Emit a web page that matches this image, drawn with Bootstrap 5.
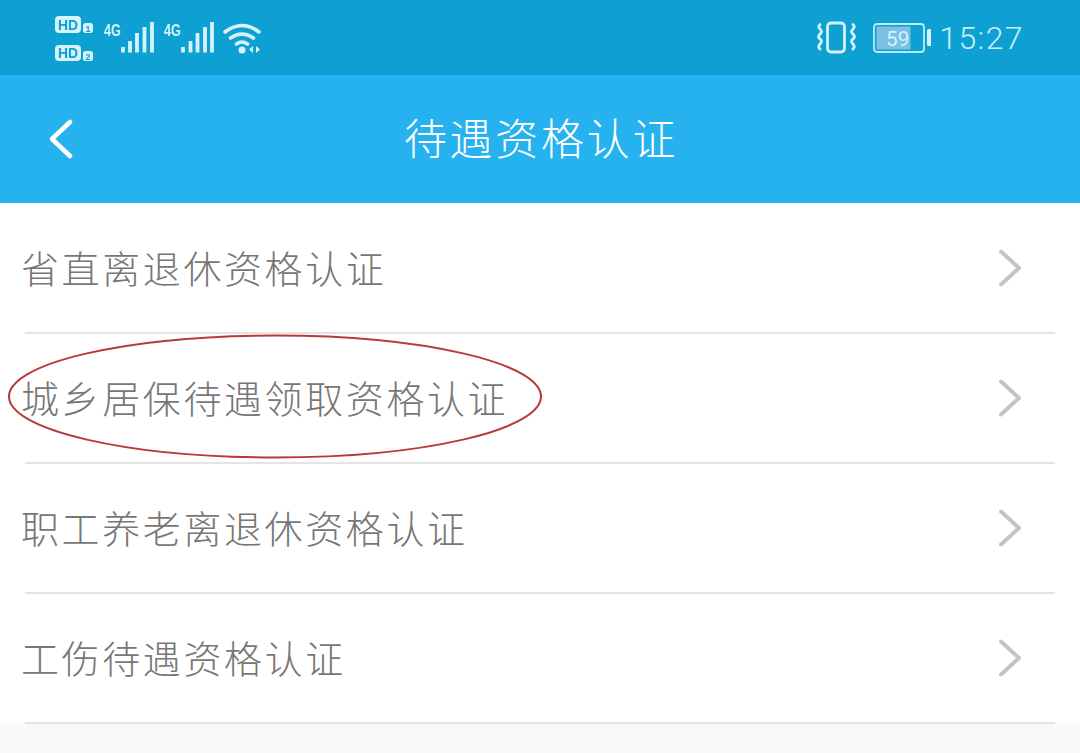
<!DOCTYPE html>
<html lang="zh"><head><meta charset="utf-8"><title>待遇资格认证</title>
<link rel="stylesheet" href="https://cdn.jsdelivr.net/npm/bootstrap@5.3.0/dist/css/bootstrap.min.css">
<style>
html,body{height:753px;overflow:hidden}
body{background:#f9f9f9;font-family:"Noto Sans CJK SC","Liberation Sans",sans-serif;position:relative}
.sbar{height:75px;background:#0ea0d2;color:#d4f3fb;padding:0 56px 0 50px}
.sbar svg{display:block;filter:blur(.35px)}
.clock{font-family:"Roboto","Liberation Sans",sans-serif;font-size:32px;letter-spacing:1.4px;color:#c8eff8;line-height:1;font-weight:300}
.appbar{height:128px;background:#25b2ee;color:#fff;position:relative}
.appbar-title{font-size:43px;letter-spacing:2.7px;margin:-5px 0 0 2px;font-weight:300;line-height:1}
.back{position:absolute;left:46px;top:44px}
.rowitem{height:130px;background:#fff;position:relative;padding:0 57px 0 21px}
.rowitem::after{content:"";position:absolute;left:25px;right:25px;bottom:-1px;height:2px;background:#e4e4e4;z-index:1}
.rowtext{font-size:38px;letter-spacing:2.6px;color:#777;line-height:1;font-weight:300;margin-top:-3px}
.ring{position:absolute;left:8px;top:334px;pointer-events:none;z-index:2}
.chev{filter:blur(.4px)}
.hd{font:700 14px "Liberation Sans",sans-serif;fill:#0ea0d2}
.idx{font:700 9px "Liberation Sans",sans-serif;fill:#0ea0d2}
.net{font:700 17px "Liberation Sans",sans-serif;fill:#d4f3fb}
.batt{font:400 21px Roboto,"Liberation Sans",sans-serif;fill:#d4f3fb}
</style></head><body>
<div class="sbar d-flex align-items-center justify-content-between">
<svg width="215" height="51" viewBox="50 12 215 51" fill="none" stroke="#d4f3fb">
<rect x="55" y="16" width="26" height="17" rx="4" fill="#d4f3fb" stroke="none"/>
<rect x="55" y="45" width="26" height="16" rx="4" fill="#d4f3fb" stroke="none"/>
<text class="hd" x="58" y="30" stroke="none" textLength="20" lengthAdjust="spacingAndGlyphs">HD</text>
<text class="hd" x="58" y="58" stroke="none" textLength="20" lengthAdjust="spacingAndGlyphs">HD</text>
<rect x="83" y="23" width="10" height="10" rx="2.500" fill="#d4f3fb" stroke="none"/>
<rect x="83" y="51" width="10" height="10" rx="2.500" fill="#d4f3fb" stroke="none"/>
<text class="idx" x="85.500" y="31.500" stroke="none">1</text>
<text class="idx" x="85.500" y="59.500" stroke="none">2</text>
<text class="net" x="104" y="36" stroke="none" textLength="17" lengthAdjust="spacingAndGlyphs">4G</text>
<text class="net" x="164" y="36" stroke="none" textLength="17" lengthAdjust="spacingAndGlyphs">4G</text>
<g stroke-width="3.800"><path d="M123 47v5.500M130 41v11.500M137 33v19.500M144.500 27v25.500M152 22v30.500M183 47v5.500M190.500 41v11.500M197.500 33v19.500M205 27v25.500M212 22v30.500"/></g>
<path d="M225 32q17-13 34 0M230.500 38q11.500-8 23 0M236.500 44q5.500-4 11 0" stroke-width="3.600" stroke-linecap="round"/>
<circle cx="242" cy="50" r="3.500" fill="#d4f3fb" stroke="none"/>
<path d="M253 46l-4 3.500 4 3.500zM256 46l4 3.500-4 3.500z" fill="#d4f3fb" stroke="none"/>
</svg>
<div class="d-flex align-items-center">
<svg width="41" height="33" viewBox="0 0 41 33" fill="none" stroke="#d4f3fb" stroke-width="2.800" class="me-3">
<rect x="11.500" y="2" width="17" height="29" rx="3.500"/>
<path d="M5 3q-4 2-1 5t0 5q-3 3 0 5t0 5q-3 3 1 6M36 3q4 2 1 5t0 5q3 3 0 5t0 5q3 3-1 6"/>
</svg>
<svg width="58" height="30" viewBox="0 0 58 30" class="me-2">
<rect x="1" y="1" width="50" height="28" rx="3" fill="none" stroke="#b9ebf6" stroke-width="1.800"/>
<rect x="3.500" y="3.500" width="34" height="23" fill="#7cc0e4"/>
<rect x="54" y="6" width="4.500" height="17" rx="1.500" fill="#d4f3fb"/>
<text class="batt" x="13" y="22.500">59</text>
</svg>
<span class="clock">15:27</span>
</div>
</div>
<header class="appbar d-flex align-items-center justify-content-center">
<svg class="back" width="28" height="40" viewBox="0 0 28 40" fill="none" stroke="#fff" stroke-width="4.500" stroke-linecap="round" stroke-linejoin="round"><path d="M24 3L6 20l18 17"/></svg>
<span class="appbar-title">待遇资格认证</span>
</header>
<main>
<div class="rowitem d-flex align-items-center justify-content-between"><span class="rowtext">省直离退休资格认证</span><svg class="chev" width="26" height="40" viewBox="0 0 26 40" fill="none" stroke="#c4c4c4" stroke-width="4" stroke-linecap="round" stroke-linejoin="round"><path d="M4 3.500L22 20 4 36.500"/></svg></div>
<div class="rowitem d-flex align-items-center justify-content-between"><span class="rowtext">城乡居保待遇领取资格认证</span><svg class="chev" width="26" height="40" viewBox="0 0 26 40" fill="none" stroke="#c4c4c4" stroke-width="4" stroke-linecap="round" stroke-linejoin="round"><path d="M4 3.500L22 20 4 36.500"/></svg></div>
<div class="rowitem d-flex align-items-center justify-content-between"><span class="rowtext">职工养老离退休资格认证</span><svg class="chev" width="26" height="40" viewBox="0 0 26 40" fill="none" stroke="#c4c4c4" stroke-width="4" stroke-linecap="round" stroke-linejoin="round"><path d="M4 3.500L22 20 4 36.500"/></svg></div>
<div class="rowitem d-flex align-items-center justify-content-between"><span class="rowtext">工伤待遇资格认证</span><svg class="chev" width="26" height="40" viewBox="0 0 26 40" fill="none" stroke="#c4c4c4" stroke-width="4" stroke-linecap="round" stroke-linejoin="round"><path d="M4 3.500L22 20 4 36.500"/></svg></div>
</main>
<svg class="ring" width="534" height="126" viewBox="0 0 534 126" fill="none"><ellipse cx="267" cy="62.500" rx="266" ry="61" stroke="#b8393a" stroke-width="2"/></svg>
</body></html>
